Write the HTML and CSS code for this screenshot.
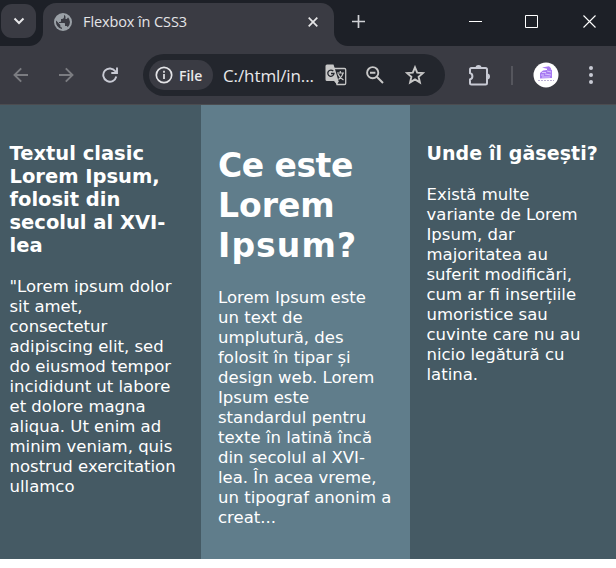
FILE: index.html
```html
<!DOCTYPE html>
<html lang="ro">
<head>
<meta charset="utf-8">
<title>Flexbox în CSS3</title>
<link rel="stylesheet" href="styles.css">
</head>
<body>
<header class="browser">
  <div class="tabstrip">
    <div class="strip-left"><span class="tab-search"><svg width="12" height="8" viewBox="0 0 12 8"><path d="M1.500 1.500 6 6l4.500-4.500" fill="none" stroke="#e6e6e8" stroke-width="2"/></svg></span></div>
    <div class="tab-wrap">
      <div class="tab">
        <svg class="globe" width="18" height="18" viewBox="0 0 18 18"><circle cx="9" cy="9" r="9" fill="#9aa0a6"/><path d="M10 2v2c0 1-1 2-2 2H7v2c0 .7-.5 1-1 1H5v1h5c.7 0 1 .4 1 1v2h1c.8 0 1.500.5 1.700 1.200A7 7 0 0 0 14 4.200c-.5 1-1 1.800-2 1.800h-.5V4c0-1-.7-1.700-1.500-2zM2.200 7.500A7 7 0 0 0 8 16v-1.500c-1 0-1.700-.7-1.700-1.600v-1z" fill="#3a3b43"/></svg>
        <span class="tab-title">Flexbox în CSS3</span>
        <svg class="tab-close" width="10" height="10" viewBox="0 0 10 10"><path d="M.7.7l8.600 8.600M9.300.7.7 9.300" stroke="#e6e6e8" stroke-width="1.700"/></svg>
      </div>
    </div>
    <div class="strip-right">
      <svg width="13" height="13" viewBox="0 0 13 13"><path d="M6.500 0v13M0 6.500h13" stroke="#d0d1d5" stroke-width="1.700"/></svg>
      <div class="window-buttons">
        <svg width="13" height="13" viewBox="0 0 13 13"><path d="M0 6.500h13" stroke="#fff"/></svg>
        <svg class="maximize" width="13" height="13" viewBox="0 0 13 13"><path d="M.5.5h12v12H.5z" fill="none" stroke="#fff"/></svg>
        <svg width="13" height="13" viewBox="0 0 13 13"><path d="M.5.5l12 12M12.500.5l-12 12" stroke="#fff" stroke-width="1.100"/></svg>
      </div>
    </div>
  </div>
  <div class="toolbar">
    <svg class="back" width="16" height="16" viewBox="0 0 16 16"><path d="M15 8H2M8.200 1.300 1.500 8l6.700 6.700" fill="none" stroke="#7b7c81" stroke-width="1.900"/></svg>
    <svg class="forward" width="16" height="16" viewBox="0 0 16 16"><path d="M1 8h13M7.800 1.300 14.500 8l-6.700 6.700" fill="none" stroke="#7b7c81" stroke-width="1.900"/></svg>
    <svg class="reload" width="16" height="16" viewBox="0 0 16 16"><path d="M14.300 9.500A6.600 6.600 0 1 1 13.300 4.300l1 1.300M15 .5V6H9.300" fill="none" stroke="#c8cad4" stroke-width="1.900"/></svg>
    <div class="omnibox">
      <div class="chip"><svg width="18" height="18" viewBox="0 0 18 18"><circle cx="9" cy="9" r="7.700" fill="none" stroke="#e4e4e7" stroke-width="1.700"/><path d="M9 8v5M9 4.800v1.900" stroke="#e4e4e7" stroke-width="1.700"/></svg><span>File</span></div>
      <span class="url">C:/html/in...</span>
      <svg class="translate" width="22" height="22" viewBox="0 0 22 22"><path d="M8 4.500h11.500q1.200 0 1.200 1.200v13.600q0 1.200-1.200 1.200H12L8 5" fill="none" stroke="#c7c7c7" stroke-width="1.300"/><path d="M2 .5h6.500l1 3 4 13.500H2Q.5 17 .5 15.500V2Q.5.5 2 .5zM9 17h5l-2 3.500z" fill="#c7c7c7"/><path d="M8.300 7.200A3.100 3.100 0 1 0 9 9.500H6" fill="none" stroke="#23262d" stroke-width="1.300"/><path d="M12 9h7M15.300 7v2M18 9c-.6 3-2.300 5-4.500 6.500M13 10c1 2.500 3 4.500 5.500 6" fill="none" stroke="#c7c7c7" stroke-width="1.200"/></svg>
      <svg class="magnifier" width="18" height="18" viewBox="0 0 18 18"><circle cx="6.700" cy="6.700" r="5.600" fill="none" stroke="#c7c7c7" stroke-width="1.900"/><path d="M10.800 10.800l6.200 6.200M4 6.700h5.400" stroke="#c7c7c7" stroke-width="2"/></svg>
      <svg class="star" width="20" height="20" viewBox="0 0 20 20"><path d="M10 2.300l2.200 5.300 5.700.5-4.300 3.700 1.300 5.600-4.900-3-4.900 3 1.300-5.600-4.300-3.700 5.700-.5z" fill="none" stroke="#c7c7c7" stroke-width="1.900"/></svg>
    </div>
    <svg class="puzzle" width="22" height="21" viewBox="0 0 22 21"><path d="M2.500 3h14q1.500 0 1.500 1.500V18q0 1.500-1.500 1.500h-14Q1 19.500 1 18v-3.500c3.200-1 3.200-5.500 0-6.500V4.500Q1 3 2.500 3z" fill="none" stroke="#c8cad4" stroke-width="2"/><path d="M6.500 3a3 3 0 0 1 6 0zM18 8.500a3 3 0 0 1 0 6z" fill="#c8cad4"/></svg>
    <span class="divider"></span>
    <svg class="avatar" width="26" height="26" viewBox="0 0 26 26"><circle cx="13" cy="13" r="12.500" fill="#fff"/><path d="M9 5.500l7-1.300 2 2v1.500h1v8.300l-12 .5V11l3-2.500 4-.5V6.800z" fill="#a77af2"/><path d="M9 10.500h4M14 9l4 1M8 13h3M12 12l6 1M9 15h8" stroke="#d9c5ff"/><path d="M5 18.500h16" stroke="#b9b0d2" stroke-dasharray="2 1"/></svg>
    <svg class="more" width="4" height="18" viewBox="0 0 4 18"><circle cx="2" cy="2" r="2" fill="#c8cad4"/><circle cx="2" cy="9" r="2" fill="#c8cad4"/><circle cx="2" cy="16" r="2" fill="#c8cad4"/></svg>
  </div>
</header>
<main class="columns">
  <section class="column first">
    <h3>Textul clasic<br>Lorem Ipsum,<br>folosit din<br>secolul al XVI-<br>lea</h3>
    <p>"Lorem ipsum dolor<br>sit amet,<br>consectetur<br>adipiscing elit, sed<br>do eiusmod tempor<br>incididunt ut labore<br>et dolore magna<br>aliqua. Ut enim ad<br>minim veniam, quis<br>nostrud exercitation<br>ullamco</p>
  </section>
  <section class="column second">
    <h1><span class="tight">Ce este</span><br>Lorem<br><span class="loose">Ipsum?</span></h1>
    <p>Lorem Ipsum este<br>un text de<br>umplutură, des<br>folosit în tipar și<br>design web. Lorem<br>Ipsum este<br>standardul pentru<br>texte în latină încă<br>din secolul al XVI-<br>lea. În acea vreme,<br>un tipograf anonim a<br>creat...</p>
  </section>
  <section class="column third">
    <h3>Unde îl găsești?</h3>
    <p>Există multe<br>variante de Lorem<br>Ipsum, dar<br>majoritatea au<br>suferit modificări,<br>cum ar fi inserțiile<br>umoristice sau<br>cuvinte care nu au<br>nicio legătură cu<br>latina.</p>
  </section>
</main>
</body>
</html>
```
FILE: styles.css
```css
* { box-sizing: border-box; }
body { margin: 0; width: 616px; background: #fff; overflow: hidden; }
svg { display: block; flex: none; }
.browser { height: 105px; background: #3a3b43; border-bottom: 1px solid #4b4c50; font-family: "Open Sans", "Noto Sans", sans-serif; }
.tabstrip { display: flex; height: 46px; }
.strip-left { width: 43px; background: #1d2027; border-bottom-right-radius: 14px; padding: 4px 0 0 1px; }
.tab-search { display: flex; align-items: center; justify-content: center; width: 35px; height: 34px; border-radius: 11px; background: #3a3b43; }
.tab-wrap { width: 291px; padding-top: 3px; background: linear-gradient(#1d2027 50%, #3a3b43 50%); }
.tab { display: flex; align-items: center; height: 43px; padding: 0 16px 6px 11px; border-radius: 13px 13px 0 0; background: #3a3b43; }
.tab-title { margin-left: 11px; font-family: "Open Sans", sans-serif; font-size: 14.5px; letter-spacing: -0.1px; color: #e4e4e7; white-space: nowrap; }
.tab-close { margin-left: auto; }
.strip-right { display: flex; align-items: center; flex: 1; padding: 0 20px 4px 18px; background: #1d2027; border-bottom-left-radius: 14px; }
.window-buttons { display: flex; gap: 43px; margin-left: auto; }
.maximize { margin-right: 2px; }
.toolbar { display: flex; align-items: center; height: 58px; }
.back { margin-left: 13px; }
.forward { margin-left: 29px; }
.reload { margin-left: 28px; }
.omnibox { display: flex; align-items: center; width: 302px; height: 42px; margin-left: 25px; border-radius: 21px; background: #23262d; }
.chip { display: flex; align-items: center; gap: 6px; width: 64px; height: 30px; margin-left: 6px; padding-left: 6px; border-radius: 15px; background: #3a3b43; color: #e8e8ea; font-size: 14px; font-weight: 600; }
.url { width: 92px; margin-left: 10px; color: #e8e8ea; font-family: "Open Sans", sans-serif; font-size: 17px; letter-spacing: -0.1px; white-space: nowrap; }
.translate { margin-left: 10px; }
.magnifier { margin-left: 19px; }
.star { margin-left: 21px; }
.puzzle { margin-left: 24px; }
.divider { width: 2px; height: 19px; margin-left: 20px; background: #55565d; }
.avatar { margin-left: 20px; }
.more { margin-left: 30px; }
.columns { display: flex; height: 454px; color: #fff; font-family: "DejaVu Sans", sans-serif; white-space: nowrap; }
.column { background: #455a64; }
.first { width: 201px; padding: 37px 0 0 9.5px; }
.second { width: 209px; padding: 41px 0 0 17px; background: #607d8b; }
.third { width: 206px; padding: 37px 0 0 16.5px; }
h1, h3, p { margin: 0; }
h3 { font-size: 19.5px; line-height: 23px; margin-bottom: 20px; }
.third h3 { font-size: 19px; letter-spacing: 0.07px; }
h1 { font-size: 33px; line-height: 40px; margin-bottom: 22px; }
.tight { letter-spacing: -0.5px; }
.loose { letter-spacing: 1.1px; }
p { font-size: 16.5px; line-height: 20px; }
```
